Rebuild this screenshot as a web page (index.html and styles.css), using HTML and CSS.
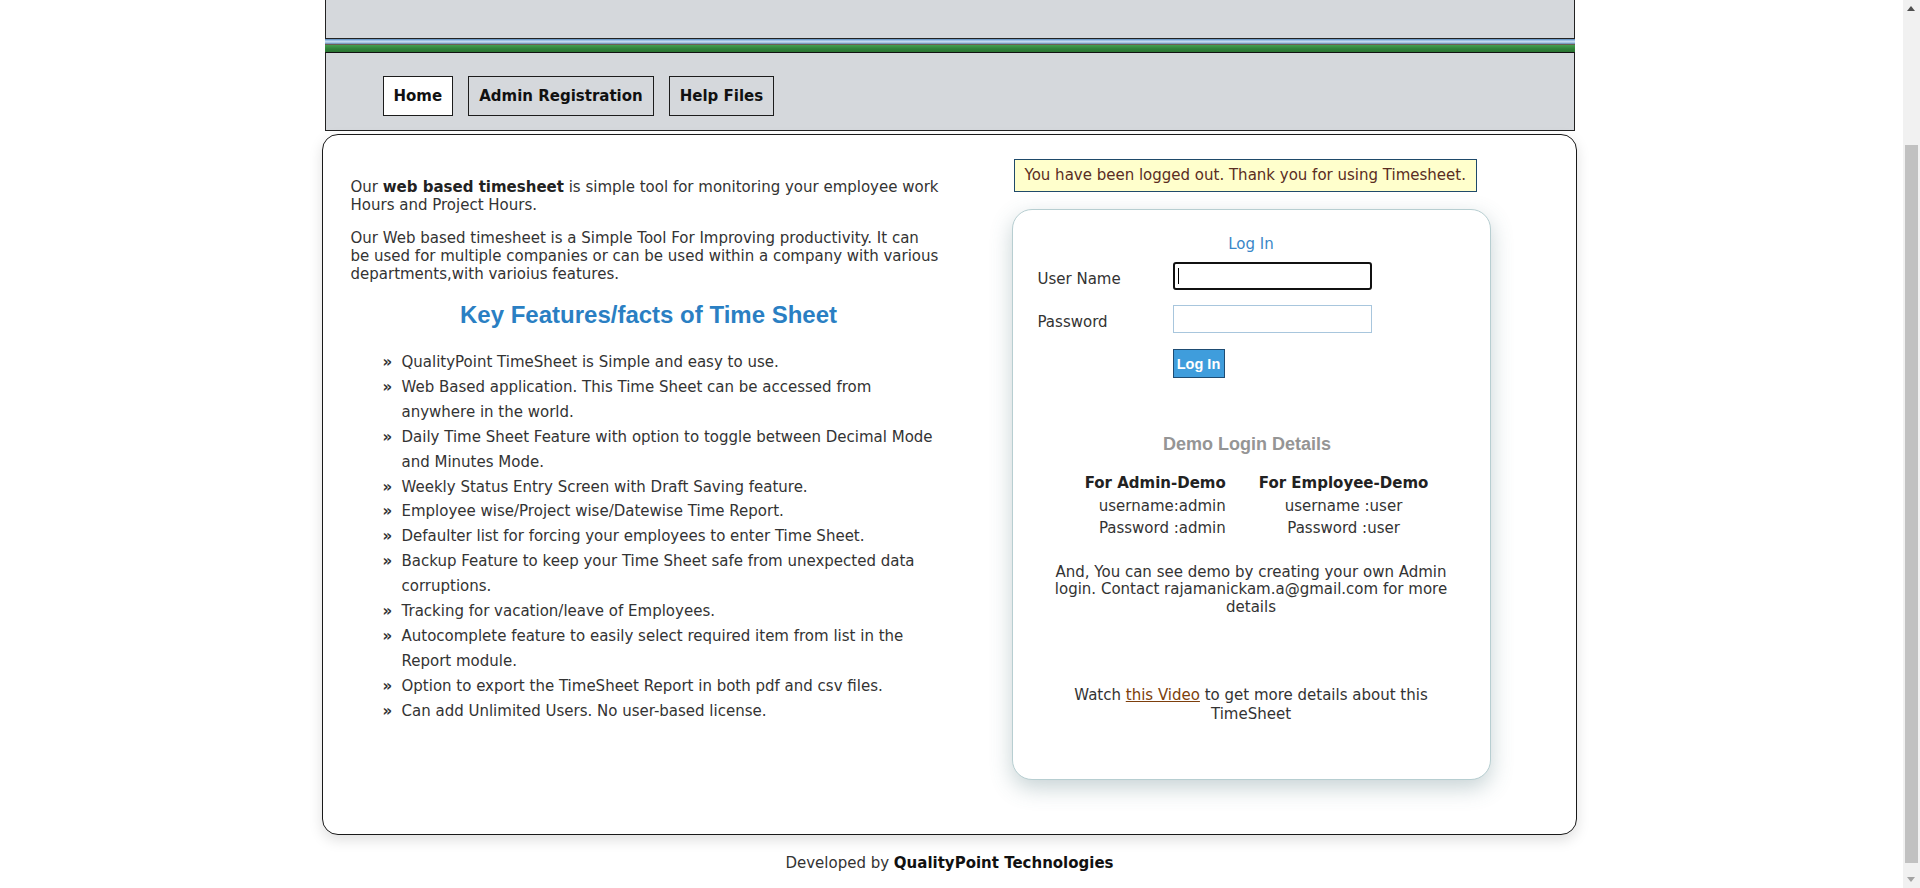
FILE: index.html
```html
<!DOCTYPE html>
<html lang="en">
<head>
<meta charset="utf-8">
<title>Timesheet - Log In</title>
<link rel="stylesheet" href="styles.css">
</head>
<body>
<div class="viewport">
<div class="page">
  <div class="header-stub"></div>
  <div class="stripe"></div>
  <nav class="nav">
    <a class="nav-btn active" href="#">Home</a>
    <a class="nav-btn" href="#">Admin Registration</a>
    <a class="nav-btn" href="#">Help Files</a>
  </nav>
  <main class="content">
    <section class="intro">
      <p>Our <b>web based timesheet</b> is simple tool for monitoring your employee work Hours and Project Hours.</p>
      <p>Our Web based timesheet is a Simple Tool For Improving productivity. It can<br>be used for multiple companies or can be used within a company with various departments,with varioius features.</p>
      <h2 class="features-title">Key Features/facts of Time Sheet</h2>
      <ul class="features">
        <li>QualityPoint TimeSheet is Simple and easy to use.</li>
        <li>Web Based application. This Time Sheet can be accessed from anywhere in the world.</li>
        <li>Daily Time Sheet Feature with option to toggle between Decimal Mode and Minutes Mode.</li>
        <li>Weekly Status Entry Screen with Draft Saving feature.</li>
        <li>Employee wise/Project wise/Datewise Time Report.</li>
        <li>Defaulter list for forcing your employees to enter Time Sheet.</li>
        <li>Backup Feature to keep your Time Sheet safe from unexpected data corruptions.</li>
        <li>Tracking for vacation/leave of Employees.</li>
        <li>Autocomplete feature to easily select required item from list in the Report module.</li>
        <li>Option to export the TimeSheet Report in both pdf and csv files.</li>
        <li>Can add Unlimited Users. No user-based license.</li>
      </ul>
    </section>
    <section class="side">
      <div class="notice">You have been logged out. Thank you for using Timesheet.</div>
      <div class="login-card">
        <div class="login-title">Log In</div>
        <form class="login-form" action="#">
          <label class="field-label" for="username">User Name</label>
          <input class="field-input focused" id="username" type="text">
          <label class="field-label" for="password">Password</label>
          <input class="field-input" id="password" type="password">
          <span class="spacer"></span>
          <button class="login-btn" type="button">Log In</button>
        </form>
        <div class="demo-title">Demo Login Details</div>
        <div class="demo-grid">
          <div class="demo-col demo-admin">
            <b>For Admin-Demo</b>
            <span>username:admin</span>
            <span>Password :admin</span>
          </div>
          <div class="demo-col demo-emp">
            <b>For Employee-Demo</b>
            <span>username :user</span>
            <span>Password :user</span>
          </div>
        </div>
        <p class="demo-note">And, You can see demo by creating your own Admin login. Contact rajamanickam.a@gmail.com for more details</p>
        <p class="video-note">Watch <a href="#">this Video</a> to get more details about this TimeSheet</p>
      </div>
    </section>
  </main>
  <footer class="footer">Developed by <b>QualityPoint Technologies</b></footer>
</div>
</div>
<div class="scrollbar" aria-hidden="true">
  <span class="sb-arrow sb-up"></span>
  <span class="sb-thumb"></span>
  <span class="sb-arrow sb-down"></span>
</div>
</body>
</html>
```
FILE: styles.css
```css
html, body {
  overflow: hidden;
}
body {
  margin: 0;
  background: #ffffff;
  font-family: "DejaVu Sans", Verdana, sans-serif;
  font-size: 15px;
  color: #333333;
}
.viewport {
  margin-right: 21px;
}
.page {
  width: 1250px;
  margin: 0 auto;
}
.header-stub {
  height: 38px;
  background: #d5d8dc;
  border: 1px solid #222222;
  border-top: none;
}
.stripe {
  height: 13px;
  background: linear-gradient(to bottom,
    #4f7fb0 0px, #86b0da 1px, #b6d1ec 2px, #cfe2f3 3px, #87aacd 4px, #6a8db0 5px,
    #6b5f52 5px, #6b5f52 6px, #44a04e 6px, #3a9044 8px, #2f8139 10px, #2a7432 13px);
}
.nav {
  display: flex;
  gap: 15px;
  padding: 23px 0 14px 57px;
  background: #d5d8dc;
  border: 1px solid #222222;
  border-top: 1px solid #111111;
}
.nav-btn {
  box-sizing: border-box;
  height: 40px;
  display: flex;
  align-items: center;
  padding: 0 10px;
  border: 1px solid #1c1c1c;
  color: #111111;
  font-weight: bold;
  font-size: 15px;
  text-decoration: none;
}
.nav-btn.active {
  background: #ffffff;
}
.content {
  display: flex;
  margin: 3px -2px 0 -3px;
  border: 1px solid #1a1a1a;
  border-radius: 16px;
  box-shadow: 0 5px 14px rgba(0, 0, 0, 0.13);
  background: #ffffff;
}
.intro {
  width: 596px;
  margin-left: 28px;
  padding-top: 43px;
}
.intro p {
  margin: 0 0 15px;
  line-height: 18px;
}
.intro b {
  color: #222222;
}
.features-title {
  margin: 18px 0 0;
  text-align: center;
  font-family: "Liberation Sans", Arial, sans-serif;
  font-size: 24px;
  line-height: 28px;
  color: #2a7fc3;
}
.features {
  list-style: none;
  margin: 21px 0 0;
  padding: 0 0 0 32px;
}
.features li {
  position: relative;
  padding-left: 19px;
  line-height: 24.9px;
}
.features li::before {
  content: "\00BB";
  position: absolute;
  left: 0;
  top: 0;
  font-weight: bold;
  color: #333333;
}
.side {
  margin-left: 65px;
  padding-top: 24px;
  padding-bottom: 54px;
}
.notice {
  display: inline-block;
  margin-left: 2px;
  padding: 7px 10px;
  line-height: 17px;
  background: #ffffcc;
  border: 1px solid #1f4a6a;
  color: #5a2d22;
}
.login-card {
  box-sizing: border-box;
  width: 479px;
  margin-top: 17px;
  padding: 24px 25px 56px;
  border: 1px solid #b7ced1;
  border-radius: 20px;
  background: #ffffff;
  box-shadow: 0 8px 22px rgba(70, 110, 115, 0.3);
}
.login-title {
  text-align: center;
  line-height: 20px;
  color: #3a87c8;
}
.login-form {
  display: grid;
  grid-template-columns: 135px 199px;
  row-gap: 15px;
  align-items: center;
  margin: 8px 0 0;
}
.field-label {
  padding-top: 5px;
  color: #333333;
}
.field-input {
  box-sizing: border-box;
  width: 199px;
  height: 28px;
  margin: 0;
  border: 1px solid #a8c6dd;
  background: #ffffff;
  outline: none;
}
.field-input.focused {
  border: 2px solid #111111;
  border-radius: 3px;
  background: linear-gradient(#000000, #000000) no-repeat 3px center / 1px 16px, #ffffff;
}
.login-btn {
  box-sizing: border-box;
  width: 52px;
  height: 29px;
  margin-top: 1px;
  padding: 0;
  border: 1px solid #1e4c73;
  background: #3f9ddc;
  color: #ffffff;
  font-family: "Liberation Sans", Arial, sans-serif;
  font-weight: bold;
  font-size: 14.5px;
}
.demo-title {
  margin-top: 55px;
  padding-right: 8px;
  text-align: center;
  line-height: 22px;
  font-family: "Liberation Sans", Arial, sans-serif;
  font-weight: bold;
  font-size: 18px;
  color: #959595;
}
.demo-grid {
  display: flex;
  justify-content: center;
  gap: 33px;
  margin-top: 17px;
  padding-left: 11px;
  line-height: 22.5px;
}
.demo-col {
  display: flex;
  flex-direction: column;
}
.demo-col b {
  color: #222222;
}
.demo-admin {
  text-align: right;
}
.demo-emp {
  text-align: center;
}
.demo-note {
  max-width: 410px;
  margin: 24px auto 0;
  text-align: center;
  line-height: 17.5px;
}
.video-note {
  max-width: 410px;
  margin: 70px auto 0;
  text-align: center;
  line-height: 18.5px;
}
.video-note a {
  color: #7d3f0c;
  text-decoration: underline;
}
.footer {
  margin-top: 19px;
  text-align: center;
  line-height: 18px;
  font-size: 15px;
  color: #333333;
}
.footer b {
  color: #111111;
}
.scrollbar {
  position: fixed;
  top: 0;
  right: 0;
  bottom: 0;
  width: 17px;
  background: #f1f1f1;
}
.sb-thumb {
  position: absolute;
  left: 2px;
  right: 2px;
  top: 145px;
  bottom: 25px;
  background: #c1c1c1;
}
.sb-arrow {
  position: absolute;
  left: 4px;
  width: 0;
  height: 0;
  border-left: 4.5px solid transparent;
  border-right: 4.5px solid transparent;
}
.sb-up {
  top: 6px;
  border-bottom: 5px solid #505050;
}
.sb-down {
  bottom: 6px;
  border-top: 5px solid #a3a3a3;
}
```
